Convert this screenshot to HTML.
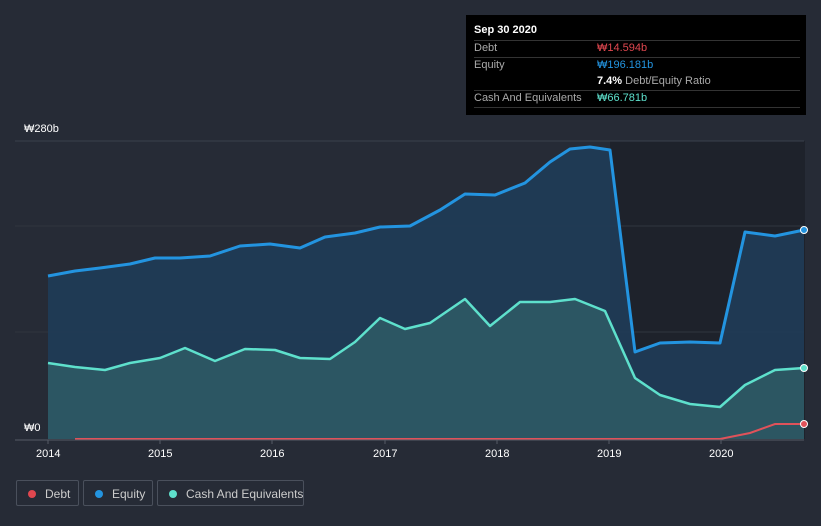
<!DOCTYPE html>
<html><head><meta charset="utf-8"><style>
body{margin:0;width:821px;height:526px;background:#262b36;font-family:"Liberation Sans","Noto Sans CJK KR",sans-serif;overflow:hidden;position:relative}
.tip{position:absolute;left:466px;top:15px;width:340px;height:100px;background:#000;color:#fff;font-size:11px}
.row{position:absolute;left:8px;right:6px;border-top:1px solid #333}
.lbl{position:absolute;left:8px;color:#aaa}
.val{position:absolute;left:131px}
.leg{position:absolute;top:480px;height:26px;border:1px solid #4a505c;border-radius:2px;color:#ccc;font-size:12px;line-height:26px;box-sizing:border-box;white-space:nowrap}
.dot{position:absolute;left:11px;top:9px;width:8px;height:8px;border-radius:50%}
.ax{position:absolute;color:#fff;font-size:11px}
</style></head><body>
<svg width="821" height="526" style="position:absolute;left:0;top:0">
<rect x="610" y="141" width="195" height="298" fill="#1e222b"/>
<line x1="15" y1="141" x2="804" y2="141" stroke="#3a404c"/>
<line x1="15" y1="226" x2="804" y2="226" stroke="#30353f"/>
<line x1="15" y1="332" x2="804" y2="332" stroke="#30353f"/>
<path d="M48,276 L75,271 100,268 130,264 155,258 180,258 210,256 240,246 270,244 300,248 325,237 355,233 380,227 410,226 440,210 465,194 495,195 525,183 550,162 570,149 590,147 610,150 635,352 660,343 690,342 720,343 745,232 775,236 804,230 L804,439 48,439Z" fill="#1f3c58" opacity="0.9"/>
<path d="M48,363 L75,367 105,370 130,363 160,358 185,348 215,361 245,349 275,350 300,358 330,359 355,342 380,318 405,329 430,323 465,299 490,326 520,302 550,302 575,299 605,311 635,378 660,395 690,404 720,407 745,385 775,370 804,368 L804,439 48,439Z" fill="#2f5e66" opacity="0.8"/>
<path d="M48,276 L75,271 100,268 130,264 155,258 180,258 210,256 240,246 270,244 300,248 325,237 355,233 380,227 410,226 440,210 465,194 495,195 525,183 550,162 570,149 590,147 610,150 635,352 660,343 690,342 720,343 745,232 775,236 804,230" fill="none" stroke="#2394e0" stroke-width="3" stroke-linejoin="round"/>
<path d="M48,363 L75,367 105,370 130,363 160,358 185,348 215,361 245,349 275,350 300,358 330,359 355,342 380,318 405,329 430,323 465,299 490,326 520,302 550,302 575,299 605,311 635,378 660,395 690,404 720,407 745,385 775,370 804,368" fill="none" stroke="#5ee0cc" stroke-width="2.5" stroke-linejoin="round"/>
<path d="M75,439 L720,439 750,433 775,424 804,424" fill="none" stroke="#e0525a" stroke-width="2"/>
<line x1="15" y1="440" x2="804" y2="440" stroke="#555b66"/>
<g stroke="#555b66"><line x1="48" y1="440" x2="48" y2="444"/><line x1="160" y1="440" x2="160" y2="444"/><line x1="272" y1="440" x2="272" y2="444"/><line x1="385" y1="440" x2="385" y2="444"/><line x1="497" y1="440" x2="497" y2="444"/><line x1="609" y1="440" x2="609" y2="444"/><line x1="721" y1="440" x2="721" y2="444"/></g>
<circle cx="804" cy="230" r="3.5" fill="#2394e0" stroke="#fff"/>
<circle cx="804" cy="368" r="3.5" fill="#5ee0cc" stroke="#fff"/>
<circle cx="804" cy="424" r="3.5" fill="#e0525a" stroke="#fff"/>
</svg>
<div class="ax" style="left:24px;top:123px">₩280b</div>
<div class="ax" style="left:24px;top:422px">₩0</div>
<div class="ax" style="left:36px;top:448px">2014</div>
<div class="ax" style="left:148px;top:448px">2015</div>
<div class="ax" style="left:260px;top:448px">2016</div>
<div class="ax" style="left:373px;top:448px">2017</div>
<div class="ax" style="left:485px;top:448px">2018</div>
<div class="ax" style="left:597px;top:448px">2019</div>
<div class="ax" style="left:709px;top:448px">2020</div>
<div class="tip">
<div style="position:absolute;left:8px;top:9px;font-weight:bold">Sep 30 2020</div>
<div class="row" style="top:25px"></div>
<div class="lbl" style="top:27px">Debt</div><div class="val" style="top:27px;color:#e0474f">₩14.594b</div>
<div class="row" style="top:42px"></div>
<div class="lbl" style="top:44px">Equity</div><div class="val" style="top:44px;color:#2394e0">₩196.181b</div>
<div class="val" style="top:60px;color:#aaa"><b style="color:#fff">7.4%</b> Debt/Equity Ratio</div>
<div class="row" style="top:75px"></div>
<div class="lbl" style="top:77px">Cash And Equivalents</div><div class="val" style="top:77px;color:#5ee0cc">₩66.781b</div>
<div class="row" style="top:92px"></div>
</div>
<div class="leg" style="left:16px;width:63px"><span class="dot" style="background:#e0474f"></span><span style="position:absolute;left:28px">Debt</span></div>
<div class="leg" style="left:83px;width:70px"><span class="dot" style="background:#2394e0"></span><span style="position:absolute;left:28px">Equity</span></div>
<div class="leg" style="left:157px;width:147px"><span class="dot" style="background:#5ee0cc"></span><span style="position:absolute;left:28px">Cash And Equivalents</span></div>
</body></html>
